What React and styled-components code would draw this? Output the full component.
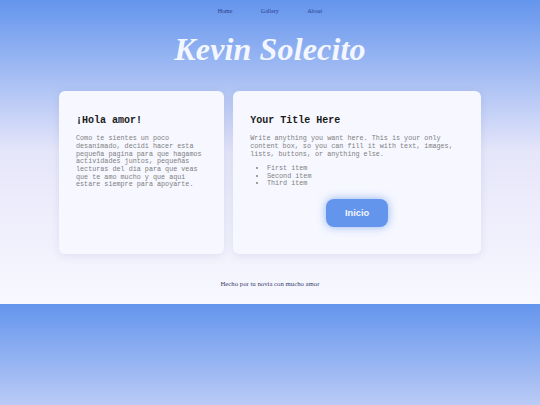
import styled, { createGlobalStyle } from "styled-components";

const GlobalStyle = createGlobalStyle`
  html {
    background: linear-gradient(to bottom, #6495ed, #e6e6fa, #f8f8ff) 0 0 / 100% 304px repeat;
  }
  body {
    margin: 0;
  }
`;

export default function App() {
  return (
    <>
      <GlobalStyle />
      <Page>
        <Nav>
          <NavLink href="#">Home</NavLink>
          <NavLink href="#">Gallery</NavLink>
          <NavLink href="#">About</NavLink>
        </Nav>
        <Title>Kevin Solecito</Title>
        <Cards>
          <Card>
            <CardTitle>¡Hola amor!</CardTitle>
            <Text>
              Como te sientes un poco desanimado, decidi hacer esta pequeña
              pagina para que hagamos actividades juntos, pequeñas lecturas del
              dia para que veas que te amo mucho y que aqui estare siempre para
              apoyarte.
            </Text>
          </Card>
          <Card>
            <CardTitle>Your Title Here</CardTitle>
            <Text>
              Write anything you want here. This is your only content box, so
              you can fill it with text, images, lists, buttons, or anything
              else.
            </Text>
            <List>
              <li>First item</li>
              <li>Second item</li>
              <li>Third item</li>
            </List>
            <ButtonRow>
              <Button>Inicio</Button>
            </ButtonRow>
          </Card>
        </Cards>
        <Footer>Hecho por tu novia con mucho amor</Footer>
      </Page>
    </>
  );
}

const Page = styled.div`
  height: 304px;
  display: flex;
  flex-direction: column;
  align-items: center;
`;

const Nav = styled.nav`
  display: flex;
  gap: 28.4px;
  padding-top: 8px;
  font-family: "Liberation Serif", serif;
  font-size: 6px;
  line-height: 7px;
`;

const NavLink = styled.a`
  color: #2b3b8c;
  text-decoration: none;
`;

const Title = styled.h1`
  margin: 15.5px 0 0;
  font-family: "Liberation Serif", serif;
  font-style: italic;
  font-weight: bold;
  font-size: 32px;
  line-height: 36px;
  letter-spacing: 0.15px;
  color: #f4f7ff;
`;

const Cards = styled.div`
  margin-top: 24.5px;
  width: 422px;
  display: grid;
  grid-template-columns: 2fr 3fr;
  gap: 9px;
`;

const Card = styled.div`
  background: #f6f7ff;
  border-radius: 6px;
  padding: 17px;
  box-shadow: 0 2px 8px rgba(60, 70, 130, 0.1);
  font-family: "Courier New", "Liberation Mono", monospace;
`;

const CardTitle = styled.h2`
  margin: 7.4px 0 8.8px;
  font-size: 10px;
  line-height: 11.3px;
  font-weight: bold;
  color: #1a1a1a;
`;

const Text = styled.p`
  margin: 0;
  font-size: 6.75px;
  line-height: 7.65px;
  color: #808080;
`;

const List = styled.ul`
  margin: 6.7px 0 0;
  padding-left: 16.7px;
  font-size: 6.75px;
  line-height: 7.65px;
  color: #808080;
`;

const ButtonRow = styled.div`
  display: flex;
  justify-content: center;
  margin: 11px 0 10px;
`;

const Button = styled.button`
  width: 62px;
  height: 27.5px;
  border: none;
  border-radius: 8px;
  background: #6495ed;
  color: #f2f5ff;
  font-family: "Liberation Sans", Arial, sans-serif;
  font-weight: bold;
  font-size: 9.3px;
  box-shadow: 0 0 8px rgba(100, 149, 237, 0.7);
  cursor: pointer;
`;

const Footer = styled.footer`
  margin-top: 25.5px;
  font-family: "Liberation Serif", serif;
  font-size: 6.75px;
  line-height: 9px;
  color: #3a3f6e;
`;
